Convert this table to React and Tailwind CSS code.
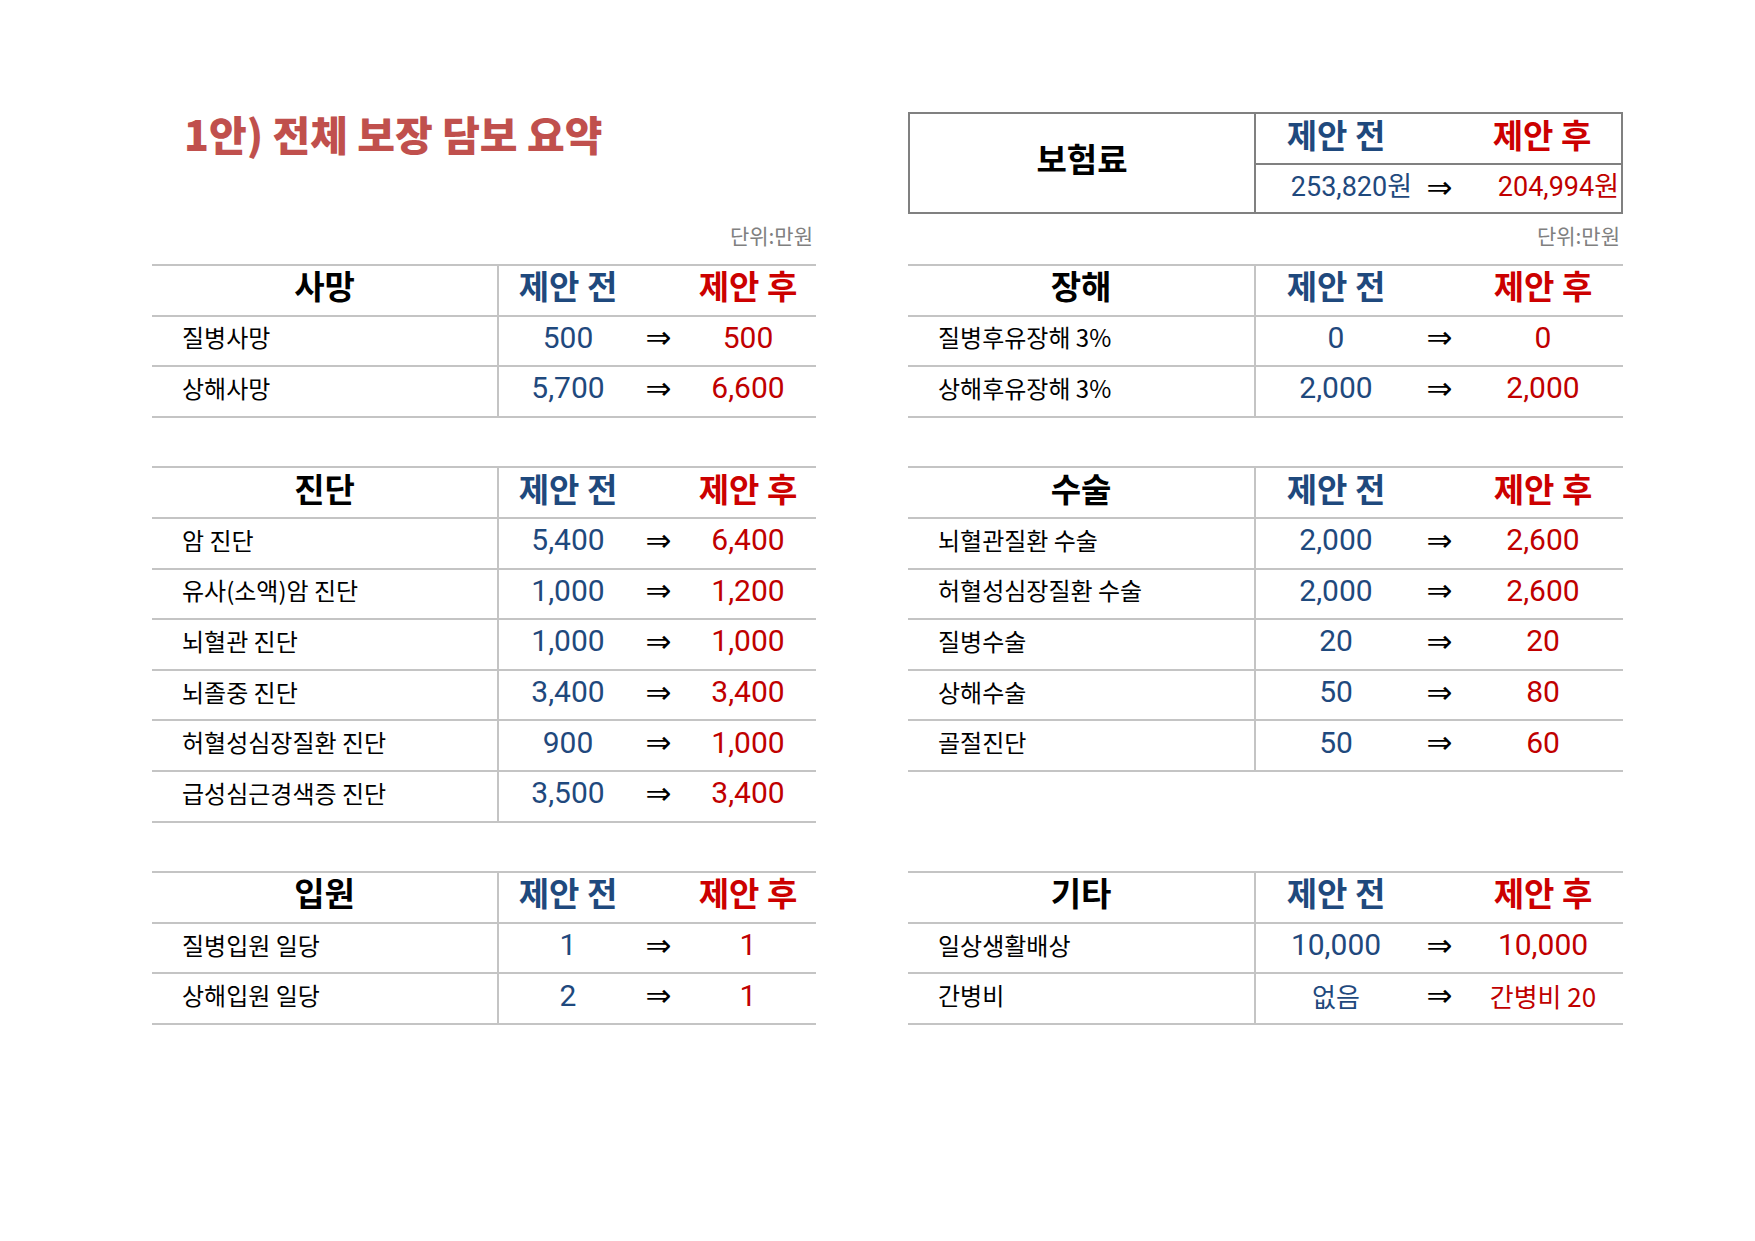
const KO = "font-['Noto_Sans_CJK_KR','Noto_Sans',sans-serif]"
const NUM = "font-['Roboto','Noto_Sans_CJK_KR',sans-serif]"
const ARROW = "font-['DejaVu_Sans',sans-serif] text-[31px] text-black leading-none"

const LEFT = [
  {
    title: '사망',
    rows: [
      ['질병사망', '500', '500'],
      ['상해사망', '5,700', '6,600'],
    ],
  },
  {
    title: '진단',
    rows: [
      ['암 진단', '5,400', '6,400'],
      ['유사(소액)암 진단', '1,000', '1,200'],
      ['뇌혈관 진단', '1,000', '1,000'],
      ['뇌졸중 진단', '3,400', '3,400'],
      ['허혈성심장질환 진단', '900', '1,000'],
      ['급성심근경색증 진단', '3,500', '3,400'],
    ],
  },
  {
    title: '입원',
    rows: [
      ['질병입원 일당', '1', '1'],
      ['상해입원 일당', '2', '1'],
    ],
  },
]

const RIGHT = [
  {
    title: '장해',
    rows: [
      ['질병후유장해 3%', '0', '0'],
      ['상해후유장해 3%', '2,000', '2,000'],
    ],
  },
  {
    title: '수술',
    rows: [
      ['뇌혈관질환 수술', '2,000', '2,600'],
      ['허혈성심장질환 수술', '2,000', '2,600'],
      ['질병수술', '20', '20'],
      ['상해수술', '50', '80'],
      ['골절진단', '50', '60'],
    ],
  },
  {
    title: '기타',
    rows: [
      ['일상생활배상', '10,000', '10,000'],
      ['간병비', '없음', '간병비 20', true],
    ],
  },
]

// value cell: numbers use the wider digit face, korean text stays smaller
function Value({ v, text, color }) {
  if (text) {
    return <span className={`${KO} text-[26px] ${color}`}>{v}</span>
  }
  return <span className={`${NUM} text-[30px] ${color}`}>{v}</span>
}

function Table({ data, cols }) {
  return (
    <div className="border-t-2 border-[#c4c4c4]">
      <div className={`grid ${cols} h-[50.6px] border-b-2 border-[#c4c4c4] items-stretch`}>
        <div className="border-r-2 border-[#c4c4c4] flex items-center justify-center pb-[9px]">
          <span className={`${KO} text-[33px] font-bold text-black leading-none`}>{data.title}</span>
        </div>
        <div className="flex items-center justify-center pb-[9px]">
          <span className={`${KO} text-[33px] font-bold text-[#1f497d] leading-none`}>제안 전</span>
        </div>
        <div />
        <div className="flex items-center justify-center pb-[9px]">
          <span className={`${KO} text-[33px] font-bold text-[#cc0000] leading-none`}>제안 후</span>
        </div>
      </div>
      {data.rows.map(([label, before, after, text]) => (
        <div key={label} className={`grid ${cols} h-[50.6px] border-b-2 border-[#c4c4c4] items-stretch`}>
          <div className="border-r-2 border-[#c4c4c4] flex items-center pl-[30px] pb-[7px]">
            <span className={`${KO} text-[24px] text-black leading-none`}>{label}</span>
          </div>
          <div className="flex items-center justify-center leading-none pb-[6px]">
            <Value v={before} text={text} color="text-[#1f497d]" />
          </div>
          <div className="flex items-center justify-center pb-[6px]">
            <span className={ARROW}>⇒</span>
          </div>
          <div className="flex items-center justify-center leading-none pb-[6px]">
            <Value v={after} text={text} color="text-[#c00000]" />
          </div>
        </div>
      ))}
    </div>
  )
}

function Unit() {
  return (
    <div className="h-[50px] flex items-end justify-end pb-[18px] pr-[3px]">
      <span className={`${KO} text-[21px] text-[#808080] leading-none`}>단위:만원</span>
    </div>
  )
}

const LCOLS = 'grid-cols-[347px_138px_43px_136px]'
const RCOLS = 'grid-cols-[348px_160px_47px_160px]'

export default function App() {
  return (
    <div className="w-[1755px] h-[1241px] bg-white">
      <div className="pt-[112px] pl-[152px] flex flex-col">
        {/* top: title + premium box */}
        <div className="grid grid-cols-[664px_715px] gap-x-[92px]">
          <div className="h-[102px] pt-[1px] pl-[32px]">
            <h1 className={`${KO} text-[41px] font-black text-[#c0504d] leading-none`}>
              1안) 전체 보장 담보 요약
            </h1>
          </div>
          <div className="h-[102px] border-2 border-[#808080] flex">
            <div className="w-[346px] border-r-2 border-[#808080] flex items-center justify-center pb-[10px]">
              <span className={`${KO} text-[33px] font-bold text-black leading-none`}>보험료</span>
            </div>
            <div className="flex-1 flex flex-col">
              <div className="h-[51px] border-b-2 border-[#808080] grid grid-cols-[160px_47px_1fr]">
                <div className="flex items-center justify-center pb-[9px]">
                  <span className={`${KO} text-[33px] font-bold text-[#1f497d] leading-none`}>제안 전</span>
                </div>
                <div />
                <div className="flex items-center justify-center pb-[9px]">
                  <span className={`${KO} text-[33px] font-bold text-[#cc0000] leading-none`}>제안 후</span>
                </div>
              </div>
              <div className="flex-1 grid grid-cols-[160px_47px_1fr]">
                <div className="flex items-center justify-end pr-[4px] pb-[2px]">
                  <span className={`${NUM} text-[27px] text-[#1f497d] leading-none`}>253,820원</span>
                </div>
                <div className="flex items-center justify-center pb-[2px]">
                  <span className={ARROW}>⇒</span>
                </div>
                <div className="flex items-center justify-end pr-[2px] pb-[2px]">
                  <span className={`${NUM} text-[27px] text-[#c00000] leading-none`}>204,994원</span>
                </div>
              </div>
            </div>
          </div>
        </div>

        <div className="grid grid-cols-[664px_715px] gap-x-[92px]">
          <Unit />
          <Unit />
        </div>

        <div className="flex flex-col gap-[48.6px]">
          {LEFT.map((l, i) => (
            <div key={l.title} className="grid grid-cols-[664px_715px] gap-x-[92px] items-start">
              <Table data={l} cols={LCOLS} />
              <Table data={RIGHT[i]} cols={RCOLS} />
            </div>
          ))}
        </div>
      </div>
    </div>
  )
}
